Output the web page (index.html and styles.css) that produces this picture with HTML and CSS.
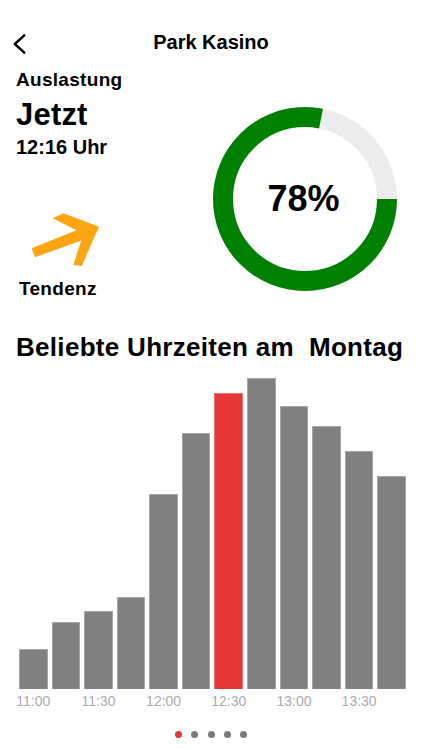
FILE: index.html
```html
<!DOCTYPE html>
<html lang="de">
<head>
<meta charset="utf-8">
<title>Park Kasino</title>
<link rel="stylesheet" href="styles.css">
</head>
<body>
<div class="screen">
  <header class="nav">
    <div class="nav-left">
      <svg class="back" width="14" height="23" viewBox="12 30.5 14 23" aria-hidden="true">
        <polyline points="24.3,34.8 14.8,43.5 24.3,52.2" fill="none" stroke="#000" stroke-width="2.4" stroke-linecap="round" stroke-linejoin="round"/>
      </svg>
    </div>
    <h1 class="nav-title">Park Kasino</h1>
    <div></div>
  </header>

  <section class="summary">
    <div class="summary-text">
      <div class="label">Auslastung</div>
      <div class="now">Jetzt</div>
      <div class="time">12:16 Uhr</div>
      <svg class="trend-arrow" width="80" height="60" viewBox="25 210 80 60" aria-hidden="true">
        <polygon points="63.3,213.3 99,226.7 81.7,266 73.3,265 81.2,240.5 35,257.3 31.7,248.3 76.5,230.2 52.7,218.3" fill="#ffa514"/>
      </svg>
      <div class="trend-label">Tendenz</div>
    </div>
    <div class="gauge">
      <svg class="gauge-ring" width="184" height="184" viewBox="0 0 184 184" aria-hidden="true">
        <circle cx="92" cy="92" r="82" fill="none" stroke="#ececec" stroke-width="20"/>
        <circle cx="92" cy="92" r="82" fill="none" stroke="#008000" stroke-width="20" stroke-dasharray="401.9 600"/>
      </svg>
      <div class="gauge-value">78%</div>
    </div>
  </section>

  <h2 class="chart-title">Beliebte Uhrzeiten am&nbsp; Montag</h2>

  <div class="chart">
    <div class="bar" style="height:40px"></div>
    <div class="bar" style="height:67px"></div>
    <div class="bar" style="height:78px"></div>
    <div class="bar" style="height:92px"></div>
    <div class="bar" style="height:195px"></div>
    <div class="bar" style="height:256px"></div>
    <div class="bar bar-now" style="height:296px"></div>
    <div class="bar" style="height:311px"></div>
    <div class="bar" style="height:283px"></div>
    <div class="bar" style="height:263px"></div>
    <div class="bar" style="height:238px"></div>
    <div class="bar" style="height:213px"></div>
  </div>

  <div class="axis">
    <div class="tick">11:00</div><div class="tick"></div>
    <div class="tick">11:30</div><div class="tick"></div>
    <div class="tick">12:00</div><div class="tick"></div>
    <div class="tick">12:30</div><div class="tick"></div>
    <div class="tick">13:00</div><div class="tick"></div>
    <div class="tick">13:30</div><div class="tick"></div>
  </div>

  <div class="pager">
    <span class="dot dot-active"></span>
    <span class="dot"></span>
    <span class="dot"></span>
    <span class="dot"></span>
    <span class="dot"></span>
  </div>
</div>
</body>
</html>
```

FILE: styles.css
```css
* {
  box-sizing: border-box;
}

html, body {
  margin: 0;
  padding: 0;
  background: #fff;
}

body {
  font-family: "Liberation Sans", Arial, sans-serif;
  color: #000;
}

.screen {
  width: 422px;
  height: 750px;
  overflow: hidden;
}

/* Navigation bar */
.nav {
  display: grid;
  grid-template-columns: 1fr auto 1fr;
  align-items: center;
  padding-top: 30px;
}

.nav-left {
  padding-left: 12px;
}

.back {
  display: block;
}

.nav-title {
  margin: 0;
  font-size: 20px;
  line-height: 24px;
  font-weight: 700;
}

/* Summary */
.summary {
  display: flex;
  align-items: flex-start;
}

.summary-text {
  flex: 0 0 213px;
  padding-left: 16px;
}

.label {
  margin-top: 15px;
  font-size: 19px;
  line-height: 22px;
  font-weight: 700;
  letter-spacing: 0.3px;
}

.now {
  margin-top: 7.3px;
  font-size: 31px;
  line-height: 34px;
  font-weight: 700;
  letter-spacing: 0.2px;
}

.time {
  margin-top: 4px;
  font-size: 20px;
  line-height: 22px;
  font-weight: 700;
}

.trend-arrow {
  display: block;
  margin-top: 51.4px;
  margin-left: 9px;
}

.trend-label {
  margin-top: 8.4px;
  padding-left: 3px;
  font-size: 19px;
  line-height: 22px;
  font-weight: 700;
  letter-spacing: 0.3px;
}

.gauge {
  margin-top: 53px;
  width: 184px;
  height: 184px;
  display: grid;
  place-items: center;
}

.gauge-ring,
.gauge-value {
  grid-area: 1 / 1;
}

.gauge-ring {
  display: block;
}

.gauge-value {
  font-size: 36px;
  line-height: 36px;
  font-weight: 700;
  margin-right: 3px;
}

/* Chart */
.chart-title {
  margin: 32px 0 0;
  padding-left: 16px;
  font-size: 26px;
  line-height: 30px;
  font-weight: 700;
  letter-spacing: 0.3px;
}

.chart {
  margin-top: 7.6px;
  height: 319px;
  padding: 0 16px 0 19px;
  display: flex;
  align-items: flex-end;
  gap: 4px;
}

.bar {
  flex: 1 1 0;
  background: #808080;
  border: 1px solid rgba(255, 255, 255, 0.3);
  border-bottom: none;
}

.bar-now {
  background: #e53737;
}

.axis {
  margin-top: 4px;
  padding: 0 16px 0 19px;
  display: grid;
  grid-template-columns: repeat(12, 1fr);
  gap: 4px;
}

.tick {
  display: flex;
  justify-content: center;
  white-space: nowrap;
  font-size: 14px;
  line-height: 16px;
  color: #ababab;
  min-width: 0;
}

.pager {
  margin-top: 22.4px;
  display: flex;
  justify-content: center;
  gap: 9.3px;
}

.dot {
  width: 7px;
  height: 7px;
  border-radius: 50%;
  background: #7a7a7a;
}

.dot-active {
  background: #e53737;
}
```
